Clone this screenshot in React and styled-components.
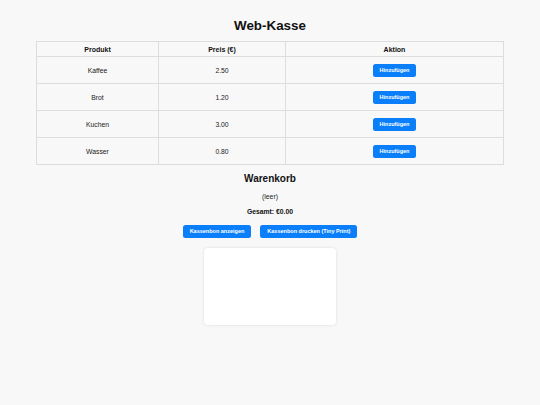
import React from "react";
import styled, { createGlobalStyle } from "styled-components";

const products = [
  { name: "Kaffee", price: "2.50" },
  { name: "Brot", price: "1.20" },
  { name: "Kuchen", price: "3.00" },
  { name: "Wasser", price: "0.80" },
];

export default function App() {
  return (
    <>
      <GlobalStyle />
      <Page>
        <Title>Web-Kasse</Title>
        <Table>
          <colgroup>
            <col style={{ width: 122 }} />
            <col style={{ width: 127 }} />
            <col style={{ width: 218 }} />
          </colgroup>
          <thead>
            <tr>
              <Th>Produkt</Th>
              <Th>Preis (€)</Th>
              <Th>Aktion</Th>
            </tr>
          </thead>
          <tbody>
            {products.map((p) => (
              <tr key={p.name}>
                <Td>{p.name}</Td>
                <Td>{p.price}</Td>
                <Td>
                  <Button>Hinzufügen</Button>
                </Td>
              </tr>
            ))}
          </tbody>
        </Table>

        <Cart>
          <CartTitle>Warenkorb</CartTitle>
          <Empty>(leer)</Empty>
          <Total>Gesamt: €0.00</Total>
          <Actions>
            <Button>Kassenbon anzeigen</Button>
            <Button>Kassenbon drucken (Tiny Print)</Button>
          </Actions>
          <Receipt />
        </Cart>
      </Page>
    </>
  );
}

const GlobalStyle = createGlobalStyle`
  html, body {
    margin: 0;
    padding: 0;
    background: #f8f8f8;
    font-family: "Liberation Sans", Arial, sans-serif;
    color: #111;
  }
`;

const Page = styled.div`
  width: 540px;
  height: 405px;
  display: flex;
  flex-direction: column;
  align-items: center;
  padding-top: 18px;
  box-sizing: border-box;
`;

const Title = styled.h1`
  margin: 0;
  font-size: 13.4px;
  line-height: 16px;
  font-weight: bold;
  color: #111;
`;

const Table = styled.table`
  margin-top: 7px;
  width: 467px;
  border-collapse: collapse;
  table-layout: fixed;
  font-size: 6.8px;
  color: #222;
`;

const Th = styled.th`
  border: 1px solid #ddd;
  height: 14px;
  padding: 0;
  font-weight: bold;
  text-align: center;
  color: #111;
  font-size: 7px;
`;

const Td = styled.td`
  border: 1px solid #ddd;
  height: 26px;
  padding: 0;
  text-align: center;
  vertical-align: middle;
`;

const Button = styled.button`
  height: 13px;
  padding: 0 7px;
  border: none;
  border-radius: 2.5px;
  background: #0b7ffa;
  color: #fff;
  font-family: "Liberation Sans", Arial, sans-serif;
  font-size: 5.5px;
  font-weight: bold;
  line-height: 13px;
  cursor: pointer;
  vertical-align: middle;
`;

const Cart = styled.section`
  display: flex;
  flex-direction: column;
  align-items: center;
`;

const CartTitle = styled.h2`
  margin: 8px 0 0;
  font-size: 10px;
  line-height: 11px;
  font-weight: bold;
  color: #111;
`;

const Empty = styled.div`
  margin-top: 8px;
  font-size: 6.8px;
  line-height: 9px;
  color: #222;
`;

const Total = styled.div`
  margin-top: 6px;
  font-size: 6.8px;
  line-height: 9px;
  font-weight: bold;
  color: #111;
`;

const Actions = styled.div`
  margin-top: 9px;
  display: flex;
  gap: 9px;
`;

const Receipt = styled.div`
  margin-top: 10px;
  width: 132px;
  height: 77px;
  background: #fff;
  border-radius: 4px;
  box-shadow: 0 0 3px rgba(0, 0, 0, 0.12);
`;
